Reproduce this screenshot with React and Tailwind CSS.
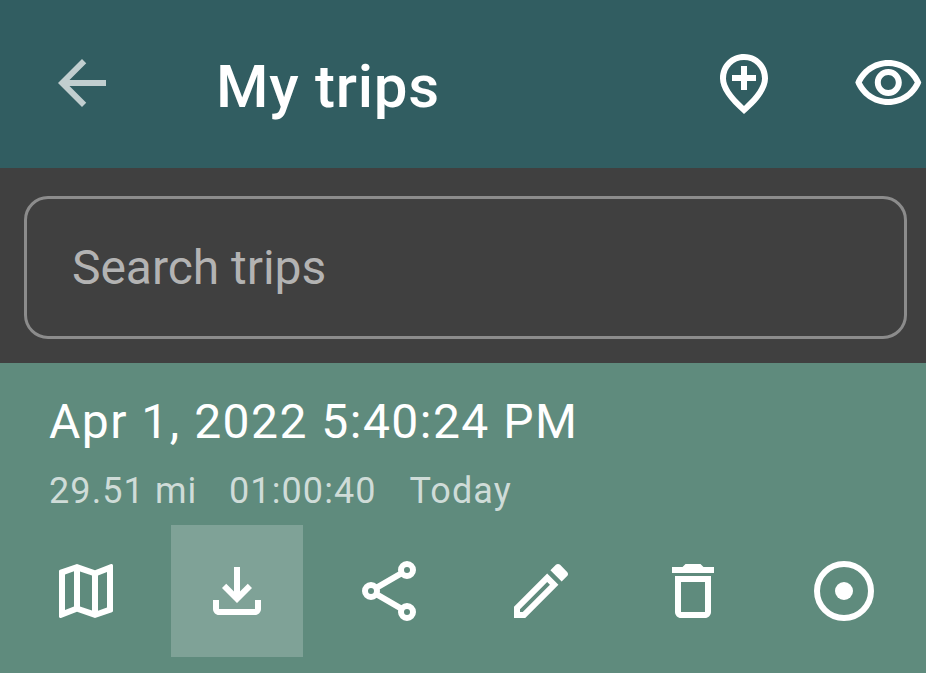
import React from "react";

function Icon({ children, className = "" }) {
  return (
    <svg viewBox="0 0 24 24" fill="currentColor" className={`size-[72px] shrink-0 ${className}`} aria-hidden="true">
      {children}
    </svg>
  );
}

const actions = [
  {
    label: "Map",
    icon: (
      <path d="M20.5 3l-.16.03L15 5.1 9 3 3.36 4.9c-.21.07-.36.25-.36.48V20.500c0 .28.22.5.5.5l.16-.03L9 18.900l6 2.100 5.640-1.900c.21-.07.36-.25.36-.48V3.500c0-.28-.22-.5-.5-.5zM10 5.470l4 1.400v11.660l-4-1.400V5.470zm-5 .99l3-1.010v11.700l-3 1.160V6.460zm14 11.080l-3 1.010V6.860l3-1.160v11.840z" />
    ),
  },
  {
    label: "Download",
    active: true,
    icon: (
      <path d="M18 15v3H6v-3H4v3c0 1.1.9 2 2 2h12c1.100 0 2-.9 2-2v-3h-2zM17 11l-1.410-1.410L13 12.170V4h-2v8.170L8.410 9.590 7 11l5 5 5-5z" />
    ),
  },
  {
    label: "Share",
    icon: (
      <g fill="none" stroke="currentColor" strokeWidth="2">
        <circle cx="18" cy="5" r="2" />
        <circle cx="6" cy="12" r="2" />
        <circle cx="18" cy="19" r="2" />
        <path d="M7.900 10.900l8.200-4.800M7.900 13.100l8.200 4.800" />
      </g>
    ),
  },
  {
    label: "Edit",
    icon: (
      <path d="M14.060 9.020l.92.92L5.920 19H5v-.92l9.060-9.060M17.660 3c-.25 0-.51.1-.7.29l-1.830 1.830 3.750 3.750 1.830-1.830c.39-.39.39-1.020 0-1.410l-2.340-2.340c-.2-.2-.45-.29-.71-.29zm-3.600 3.190L3 17.250V21h3.750L17.810 9.940l-3.750-3.750z" />
    ),
  },
  {
    label: "Delete",
    icon: (
      <path d="M16 9v10H8V9h8m-1.500-6h-5l-1 1H5v2h14V4h-3.500l-1-1zM18 7H6v12c0 1.100.9 2 2 2h8c1.100 0 2-.9 2-2V7z" />
    ),
  },
  {
    label: "Record",
    icon: (
      <>
        <circle cx="12" cy="12" r="9" fill="none" stroke="currentColor" strokeWidth="2" />
        <circle cx="12" cy="12" r="3" />
      </>
    ),
  },
];

export default function App() {
  return (
    <div className="flex h-[673px] w-[926px] flex-col overflow-hidden bg-[#5f8b7d] font-[Roboto,sans-serif] text-white">
      <header className="flex h-[168px] shrink-0 bg-[#315d61] pl-[46px]">
        <button className="mt-[47px] size-[72px] text-[#c1cecf]" aria-label="Back">
          <Icon>
            <path d="M20 11H7.830l5.590-5.590L12 4l-8 8 8 8 1.410-1.410L7.830 13H20v-2z" />
          </Icon>
        </button>
        <h1 className="mt-[52px] ml-[98px] w-[492px] text-[60px] leading-[70px] font-medium tracking-[0.75px] whitespace-nowrap">My trips</h1>
        <button className="mt-12 size-[72px]" aria-label="Add place">
          <Icon>
            <path d="M18 10.200C18 6.570 15.350 4 12 4s-6 2.570-6 6.200c0 2.340 1.950 5.440 6 9.140 4.050-3.700 6-6.800 6-9.140zM12 2c4.200 0 8 3.220 8 8.200 0 3.320-2.670 7.250-8 11.800-5.330-4.550-8-8.480-8-11.800C4 5.220 7.800 2 12 2z" />
            <path d="M11 6h2v3h3v2h-3v3h-2v-3H8V9h3z" />
          </Icon>
        </button>
        <button className="mt-12 ml-[72px] size-[72px] shrink-0" aria-label="Visibility">
          <Icon>
            <path
              transform="translate(0.1 0)"
              d="M12 6c3.790 0 7.170 2.130 8.820 5.500C19.170 14.870 15.790 17 12 17s-7.170-2.130-8.820-5.500C4.830 8.130 8.210 6 12 6m0-2C7 4 2.730 7.110 1 11.500 2.730 15.890 7 19 12 19s9.270-3.110 11-7.500C21.270 7.110 17 4 12 4zm0 5c1.380 0 2.500 1.120 2.500 2.500S13.380 14 12 14s-2.500-1.120-2.500-2.500S10.620 9 12 9m0-2c-2.480 0-4.500 2.020-4.500 4.500S9.520 16 12 16s4.500-2.020 4.500-4.500S14.480 7 12 7z"
            />
          </Icon>
        </button>
      </header>

      <section className="h-[195px] shrink-0 bg-[#404040] pt-7 pl-6">
        <input
          type="text"
          placeholder="Search trips"
          className="block h-[143px] w-[883px] rounded-[24px] border-[3px] border-[#8c8c8c] bg-transparent px-[45px] text-[48px] tracking-[-0.04px] outline-none placeholder:text-[#b3b3b3]"
        />
      </section>

      <section className="flex flex-1 flex-col">
        <h2 className="mt-[31px] pl-[49px] text-[48px] leading-[56px] tracking-[1.48px] whitespace-nowrap">Apr 1, 2022 5:40:24 PM</h2>
        <div className="mt-5 flex h-[42px] pl-[49px] text-[36px] leading-[42px] tracking-[1.1px] whitespace-nowrap text-[#cfdcd8]">
          <span className="w-[180px]">29.51 mi</span>
          <span className="w-[180.5px]">01:00:40</span>
          <span>Today</span>
        </div>
        <div className="mt-[13px] flex w-[910.25px] justify-between pl-[19.75px]">
          {actions.map(({ label, icon, active }) => (
            <button
              key={label}
              aria-label={label}
              className={`flex size-[132px] items-center justify-center ${active ? "bg-[#7fa297]" : ""}`}
            >
              <Icon>{icon}</Icon>
            </button>
          ))}
        </div>
      </section>
    </div>
  );
}
